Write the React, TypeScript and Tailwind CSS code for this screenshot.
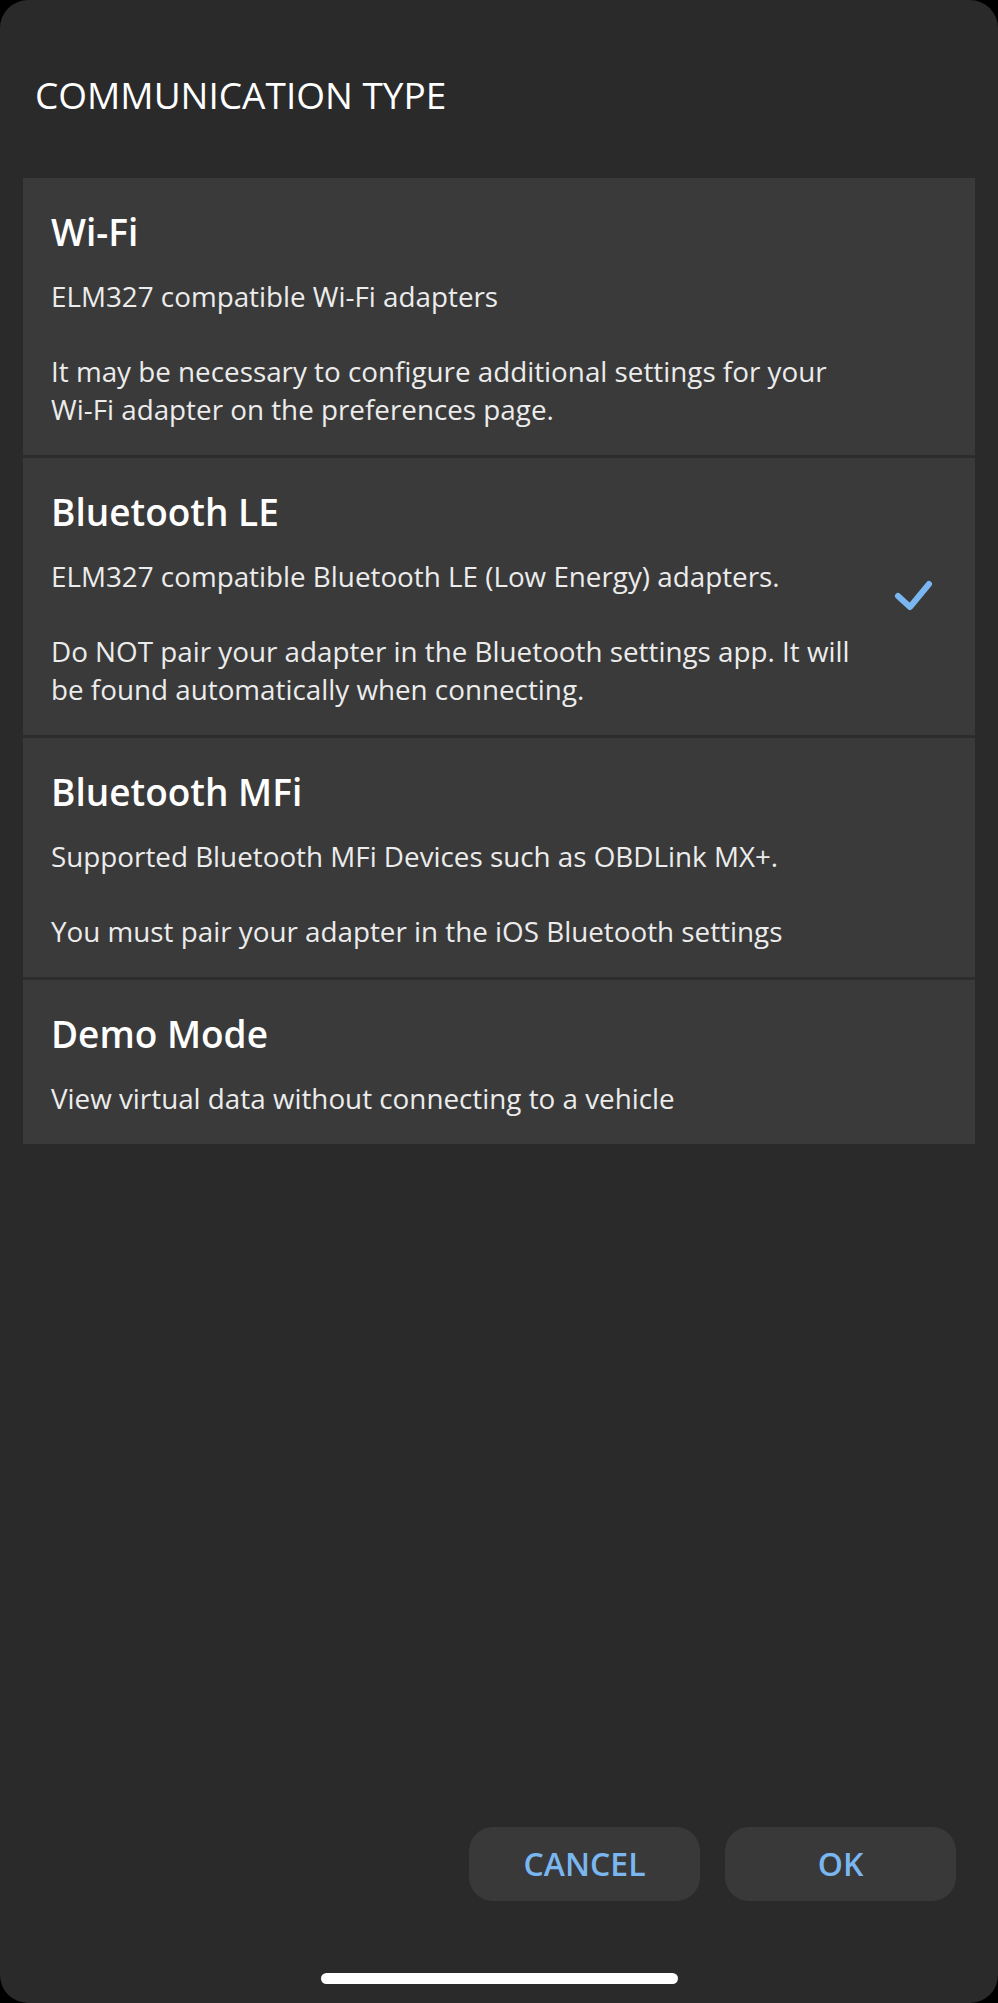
import React from 'react';

type Option = {
  title: string;
  lines: string[][];
  selected?: boolean;
};

const options: Option[] = [
  {
    title: 'Wi-Fi',
    lines: [
      ['ELM327 compatible Wi-Fi adapters'],
      ['It may be necessary to configure additional settings for your', 'Wi-Fi adapter on the preferences page.'],
    ],
  },
  {
    title: 'Bluetooth LE',
    lines: [
      ['ELM327 compatible Bluetooth LE (Low Energy) adapters.'],
      ['Do NOT pair your adapter in the Bluetooth settings app. It will', 'be found automatically when connecting.'],
    ],
    selected: true,
  },
  {
    title: 'Bluetooth MFi',
    lines: [
      ['Supported Bluetooth MFi Devices such as OBDLink MX+.'],
      ['You must pair your adapter in the iOS Bluetooth settings'],
    ],
  },
  {
    title: 'Demo Mode',
    lines: [['View virtual data without connecting to a vehicle']],
  },
];

function CheckIcon() {
  return (
    <svg width="41" height="34" viewBox="0 0 41 34" fill="none" className="mb-[5px]">
      <path d="M5 17 L17 28 L36 5" stroke="#7ab6f0" strokeWidth="6" strokeLinecap="round" strokeLinejoin="round" />
    </svg>
  );
}

function OptionCard({ option }: { option: Option }) {
  return (
    <div className="flex items-center bg-[#3a3a3a] pl-[28px] pr-[41px] pt-[30px] pb-[27px]">
      <div className="flex-1">
        <div className="text-[37px] leading-[48px] font-semibold text-white">{option.title}</div>
        <div className="mt-[21px] text-[27.8px] leading-[38px] text-[#ececec]">
          {option.lines.map((para, i) => (
            <div key={i} className={i > 0 ? 'mt-[37px]' : ''}>
              {para.map((line) => (
                <div key={line} className="whitespace-nowrap">
                  {line}
                </div>
              ))}
            </div>
          ))}
        </div>
      </div>
      {option.selected && <CheckIcon />}
    </div>
  );
}

export default function App() {
  return (
    <div className="w-[998px] h-[2003px] bg-black" style={{ fontFamily: '"Open Sans", "Noto Sans", sans-serif' }}>
      <div className="h-full flex flex-col rounded-[28px] bg-[#2a2a2a]">
        {/* title */}
        <div className="pt-[71px] pl-[35px] text-[37px] leading-[48px] text-white">COMMUNICATION TYPE</div>

        {/* options */}
        <div className="mt-[59px] mx-[23px] flex flex-col gap-[3px] bg-[#2d2d2d]">
          {options.map((o) => (
            <OptionCard key={o.title} option={o} />
          ))}
        </div>

        <div className="flex-1" />

        {/* buttons */}
        <div className="flex justify-end gap-[25px] pr-[42px]">
          <button className="w-[231px] h-[74px] rounded-[24px] bg-[#393939] text-[32px] font-semibold text-[#7ab6f0]">
            CANCEL
          </button>
          <button className="w-[231px] h-[74px] rounded-[24px] bg-[#393939] text-[32px] font-semibold text-[#7ab6f0]">
            OK
          </button>
        </div>

        {/* home indicator */}
        <div className="mt-[72px] mb-[19px] flex justify-center">
          <div className="w-[357px] h-[11px] rounded-full bg-white" />
        </div>
      </div>
    </div>
  );
}
